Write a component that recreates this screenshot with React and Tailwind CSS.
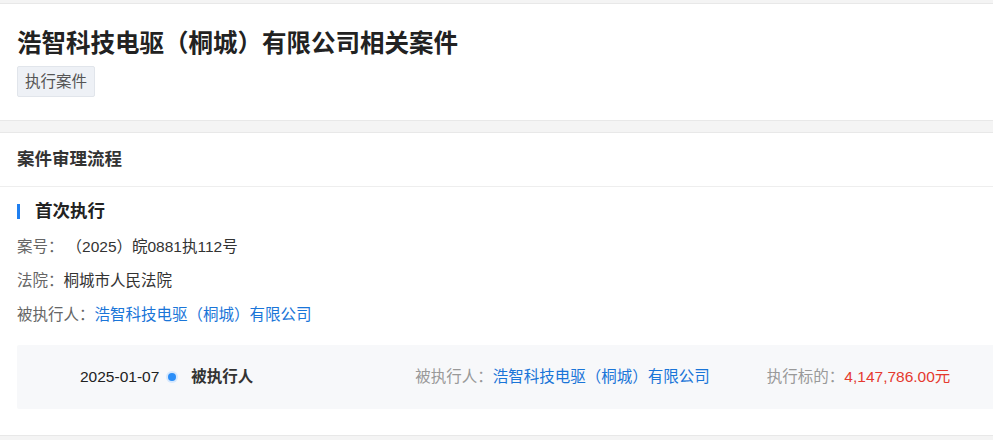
import React from 'react';

const font = { fontFamily: '"Liberation Sans", "Noto Sans CJK SC", sans-serif' };

const InfoRow = ({ label, children }) => (
  <div className="flex h-[34px] items-center text-[15.5px]">
    <span className="text-[#666]">{label}</span>
    {children}
  </div>
);

const App = () => {
  return (
    <div className="min-h-screen overflow-hidden bg-[#f4f4f4] pt-[3px] pb-[5px]" style={font}>
      <div className="border-y border-[#e8e8e8] bg-white px-[17px] pt-[23px] pb-[23px]">
        <h1 className="text-[24.5px] leading-[34px] font-bold text-[#222]">
          浩智科技电驱（桐城）有限公司相关案件
        </h1>
        <span className="mt-[5px] inline-flex h-[31px] items-center rounded-[2px] border border-[#e1e5eb] bg-[#eef1f6] px-[7px] text-[15.5px] text-[#555]">
          执行案件
        </span>
      </div>

      <div className="mt-[11px] border-y border-[#e8e8e8] bg-white">
        <div className="flex h-[54px] items-center border-b border-[#eeeeee] px-[17px] text-[17.5px] font-bold text-[#333]">
          案件审理流程
        </div>
        <div className="pl-[17px] pt-[11px] pb-[26px]">
          <div className="flex h-[26px] items-center">
            <span className="h-[15px] w-[3px] bg-[#1f7ff0]" />
            <span className="ml-[15px] text-[17.5px] font-bold text-[#222]">首次执行</span>
          </div>
          <div className="mt-[6px]">
            <InfoRow label="案号：">
              <span className="ml-[3px] text-[#333]">（2025）皖0881执112号</span>
            </InfoRow>
            <InfoRow label="法院：">
              <span className="text-[#333]">桐城市人民法院</span>
            </InfoRow>
            <InfoRow label="被执行人：">
              <span className="text-[#1a75d8]">浩智科技电驱（桐城）有限公司</span>
            </InfoRow>
          </div>
          <div className="mt-[13px] flex h-[64px] w-[1000px] items-center rounded-[2px] bg-[#f7f8fa] text-[15.5px]">
            <span className="ml-[63px] text-[#222]">2025-01-07</span>
            <span className="ml-[9px] h-[8px] w-[8px] rounded-full bg-[#2b8ef8] shadow-[0_0_0_2px_#d6e8fd]" />
            <span className="ml-[15px] font-bold text-[#333]">被执行人</span>
            <span className="ml-[162px] text-[#999]">被执行人：</span>
            <span className="text-[#1a75d8]">浩智科技电驱（桐城）有限公司</span>
            <span className="ml-[57px] text-[#999]">执行标的：</span>
            <span className="text-[#e53a2f]">4,147,786.00元</span>
          </div>
        </div>
      </div>
    </div>
  );
};

export default App;
